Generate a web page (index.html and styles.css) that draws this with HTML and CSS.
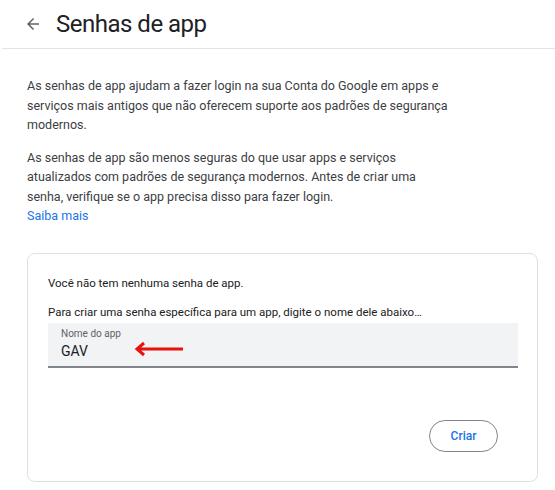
FILE: index.html
```html
<!DOCTYPE html>
<html lang="pt-BR">
<head>
    <meta charset="UTF-8">
    <meta name="viewport" content="width=device-width, initial-scale=1.0">
    <title>Senhas de app</title>
    <link rel="stylesheet" href="styles.css">
</head>
<body>
    <header class="topbar">
        <button class="back" aria-label="Voltar">
            <svg width="18" height="18" viewBox="0 0 24 24"><path d="M20 11H7.83l5.59-5.59L12 4l-8 8 8 8 1.41-1.41L7.83 13H20v-2z" fill="#5f6368"/></svg>
        </button>
        <h1>Senhas de app</h1>
    </header>
    <main class="content">
        <p class="intro">As senhas de app ajudam a fazer login na sua Conta do Google em apps e serviços mais antigos que não oferecem suporte aos padrões de segurança modernos.</p>
        <p class="intro">As senhas de app são menos seguras do que usar apps e serviços atualizados com padrões de segurança modernos. Antes de criar uma senha, verifique se o app precisa disso para fazer login.<br>
            <a href="#" class="link">Saiba mais</a></p>

        <section class="card">
            <p class="card-note">Você não tem nenhuma senha de app.</p>
            <p class="card-hint">Para criar uma senha específica para um app, digite o nome dele abaixo…</p>
            <div class="field">
                <label for="appname">Nome do app</label>
                <input id="appname" type="text" value="GAV">
                <svg class="pointer" width="50" height="16" viewBox="0 0 50 16"><path d="M3 8H49M10 2L3 8l7 6" fill="none" stroke="#e8120c" stroke-width="3" stroke-linejoin="miter"/></svg>
            </div>
            <div class="actions">
                <button id="create" class="create">Criar</button>
            </div>
        </section>
    </main>
</body>
</html>
```

FILE: styles.css
```css
body {
    margin: 0;
    font-family: Roboto, "Liberation Sans", sans-serif;
    color: #3c4043;
    background: #fff;
}
.topbar {
    display: flex;
    align-items: center;
    height: 48px;
    margin-left: 2px;
    padding-left: 22px;
    border-bottom: 1px solid #e3e3e8;
}
.back {
    display: flex;
    padding: 0;
    border: none;
    background: none;
    cursor: pointer;
}
.topbar h1 {
    margin: 0 0 0 14px;
    font-size: 24px;
    font-weight: 400;
    letter-spacing: -0.5px;
    color: #202124;
}
.content {
    width: 511px;
    padding: 27px 0 0 27px;
}
.intro {
    max-width: 424px;
    margin: 0 0 13px;
    font-size: 12.5px;
    line-height: 19.5px;
}
.link {
    color: #1a73e8;
    text-decoration: none;
}
.card {
    margin-top: 27px;
    padding: 21px 19px 29px 20px;
    border: 1px solid #e0e0e0;
    border-radius: 8px;
}
.card-note,
.card-hint {
    margin: 0;
    font-size: 11.5px;
    line-height: 16px;
    color: #202124;
}
.card-hint {
    margin-top: 13px;
}
.field {
    position: relative;
    margin-top: 3px;
    padding: 4px 13px 5px;
    background: #f1f3f4;
    border-bottom: 2px solid #80868b;
}
.field label {
    display: block;
    font-size: 10px;
    line-height: 14px;
    color: #5f6368;
}
.field input {
    display: block;
    width: 100%;
    padding: 0;
    border: none;
    outline: none;
    background: none;
    font-family: inherit;
    font-size: 14px;
    line-height: 20px;
    height: 20px;
    color: #202124;
}
.pointer {
    position: absolute;
    left: 86px;
    top: 18px;
}
.actions {
    display: flex;
    justify-content: flex-end;
    margin-top: 52px;
    padding-right: 20px;
}
.create {
    width: 69px;
    height: 32px;
    border: 1px solid #80868b;
    border-radius: 16px;
    background: #fff;
    color: #1a73e8;
    font-family: inherit;
    font-size: 12px;
    font-weight: 500;
    cursor: pointer;
}
```
